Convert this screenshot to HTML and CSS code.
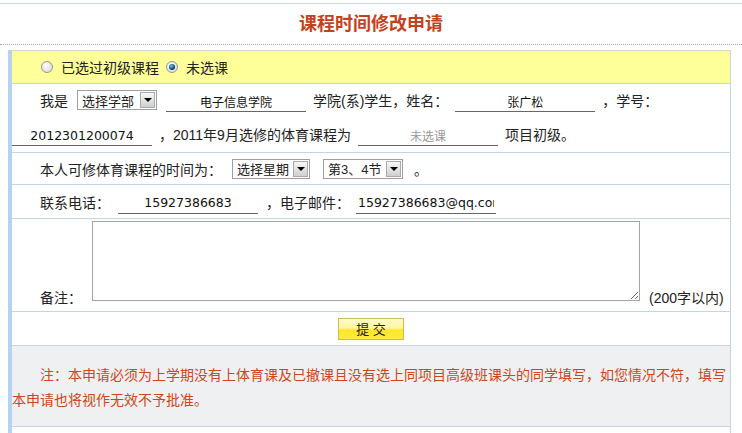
FILE: index.html
```html
<html>
    <head>
        <meta charset="utf-8">
        <title>课程时间修改申请</title>
        <link rel="stylesheet" href="styles.css">
    </head>
    <body>
        <div class="page">
            <div class="head">课程时间修改申请</div>
            <div class="form">
                <div class="row choice">
                    <span class="radio"></span><span>已选过初级课程</span>
                    <span class="radio checked second"></span><span>未选课</span>
                </div>
                <div class="row">
                    <div class="line indent">
                        <span>我是</span>
                        <span class="sel w80"><span>选择学部</span><span class="arrow"></span></span>
                        <input type="text" class="field" value="电子信息学院" readonly>
                        <span>学院(系)学生，姓名：</span>
                        <input type="text" class="field" value="张广松" readonly>
                        <span>，学号：</span>
                    </div>
                    <div class="line second-line">
                        <input type="text" class="field num first" value="2012301200074" readonly>
                        <span>，2011年9月选修的体育课程为</span>
                        <input type="text" class="field grey" value="未选课" readonly>
                        <span>项目初级。</span>
                    </div>
                </div>
                <div class="row">
                    <div class="line indent short">
                        <span>本人可修体育课程的时间为：</span>
                        <span class="sel w78 day"><span>选择星期</span><span class="arrow"></span></span>
                        <span class="sel w80 lesson"><span>第3、4节</span><span class="arrow"></span></span>
                        <span class="stop">。</span>
                    </div>
                </div>
                <div class="row">
                    <div class="line indent mid">
                        <span>联系电话：</span>
                        <input type="text" class="field num phone" value="15927386683" readonly>
                        <span>，电子邮件：</span>
                        <input type="text" class="field num mail" value="15927386683@qq.com" readonly>
                    </div>
                </div>
                <div class="row remark">
                    <span>备注：</span>
                    <textarea class="memo"></textarea>
                    <span>(200字以内)</span>
                </div>
                <div class="row submit-row">
                    <input type="button" class="submit" value="提 交">
                </div>
                <div class="row note">注：本申请必须为上学期没有上体育课及已撤课且没有选上同项目高级班课头的同学填写，如您情况不符，填写本申请也将视作无效不予批准。</div>
                <div class="tail"></div>
            </div>
        </div>
    </body>
</html>
```
FILE: styles.css
```css
body
{
    margin: 0;
    font-family: "Liberation Sans", "Noto Sans CJK SC", sans-serif;
    font-size: 14px;
    color: #222;
}

.page
{
    padding-top: 3px;
}

.head
{
    border-top: 1px solid #c8dbe2;
    border-bottom: 1px dotted #a8a8a8;
    height: 40px;
    line-height: 40px;
    text-align: center;
    font-size: 18px;
    font-weight: bold;
    color: #c3421d;
}

.form
{
    margin: 5px 11px 0 8px;
    border-left: 4px solid #b7d2ef;
    border-right: 1px solid #c3d6e4;
}

.row
{
    border-bottom: 1px solid #c3d6e8;
}

.choice
{
    border-top: 1px solid #c9d9cf;
    background: #ffff99;
    height: 32px;
    display: flex;
    align-items: center;
    padding-left: 29px;
}

.radio
{
    position: relative;
    width: 12px;
    height: 12px;
    box-sizing: border-box;
    border-radius: 50%;
    border: 1px solid #979797;
    background: radial-gradient(circle at 40% 35%, #ffffff, #d3d3d3);
    margin-right: 8px;
}

.radio.second
{
    margin-left: 7px;
}

.radio.checked::after
{
    content: "";
    position: absolute;
    left: 2px;
    top: 2px;
    width: 6px;
    height: 6px;
    border-radius: 50%;
    background: radial-gradient(circle at 40% 35%, #6ec3e6, #083d63 65%);
}

.line
{
    display: flex;
    align-items: center;
    height: 32px;
    white-space: nowrap;
}

.second-line
{
    height: 36px;
}

.short
{
    height: 31px;
}

.mid
{
    height: 33px;
}

.indent
{
    padding-left: 28px;
}

.field
{
    width: 140px;
    height: 24px;
    box-sizing: border-box;
    border: none;
    border-bottom: 1px solid #666;
    padding: 3px 2px 0;
    margin: 0 7px;
    background: transparent;
    text-align: center;
    font-family: "Noto Sans CJK SC", sans-serif;
    font-size: 12px;
    color: #111;
    outline: none;
}

.field.num
{
    font-family: "DejaVu Sans", sans-serif;
    font-size: 12.5px;
}

.field.first
{
    margin-left: 0;
}

.field.grey
{
    color: #999;
}

.field.phone
{
    margin: 0 8px;
}

.field.mail
{
    margin-left: 6px;
    text-align: left;
}

.sel
{
    display: inline-flex;
    align-items: center;
    justify-content: space-between;
    height: 20px;
    box-sizing: border-box;
    border: 1px solid #9aa0a6;
    background: #fff;
    padding-left: 4px;
    font-size: 13px;
    margin: 0 2px 0 9px;
}

.w80
{
    width: 80px;
}

.w78
{
    width: 78px;
}

.sel.day
{
    margin-left: 10px;
}

.sel.lesson
{
    margin-left: 11px;
}

.arrow
{
    display: flex;
    align-items: center;
    justify-content: center;
    width: 15px;
    height: 16px;
    box-sizing: border-box;
    margin-right: 1px;
    border: 1px solid #a9a9a9;
    background: linear-gradient(#f7f7f7, #cfcfcf);
}

.arrow::before
{
    content: "";
    border-left: 4px solid transparent;
    border-right: 4px solid transparent;
    border-top: 4px solid #000;
}

.stop
{
    margin-left: 9px;
}

.remark
{
    display: flex;
    align-items: flex-end;
    padding: 2px 0 3px 28px;
    line-height: 20px;
}

.memo
{
    width: 548px;
    height: 80px;
    box-sizing: border-box;
    border: 1px solid #a5a5a5;
    margin: 0 9px 7px 10px;
}

.submit-row
{
    height: 33px;
    display: flex;
    align-items: center;
    justify-content: center;
}

.submit
{
    width: 66px;
    height: 22px;
    border: 1px solid #cdbb57;
    background: linear-gradient(#fffbc4 0%, #fff5a0 45%, #ffe629 55%, #ffea40 100%);
    font-family: "Liberation Sans", "Noto Sans CJK SC", sans-serif;
    font-size: 13px;
    color: #222;
    padding: 0;
}

.note
{
    background: #eef0f1;
    color: #cf4719;
    padding: 17px 0 13px;
    line-height: 25px;
    text-indent: 28px;
}

.tail
{
    height: 20px;
}
```
